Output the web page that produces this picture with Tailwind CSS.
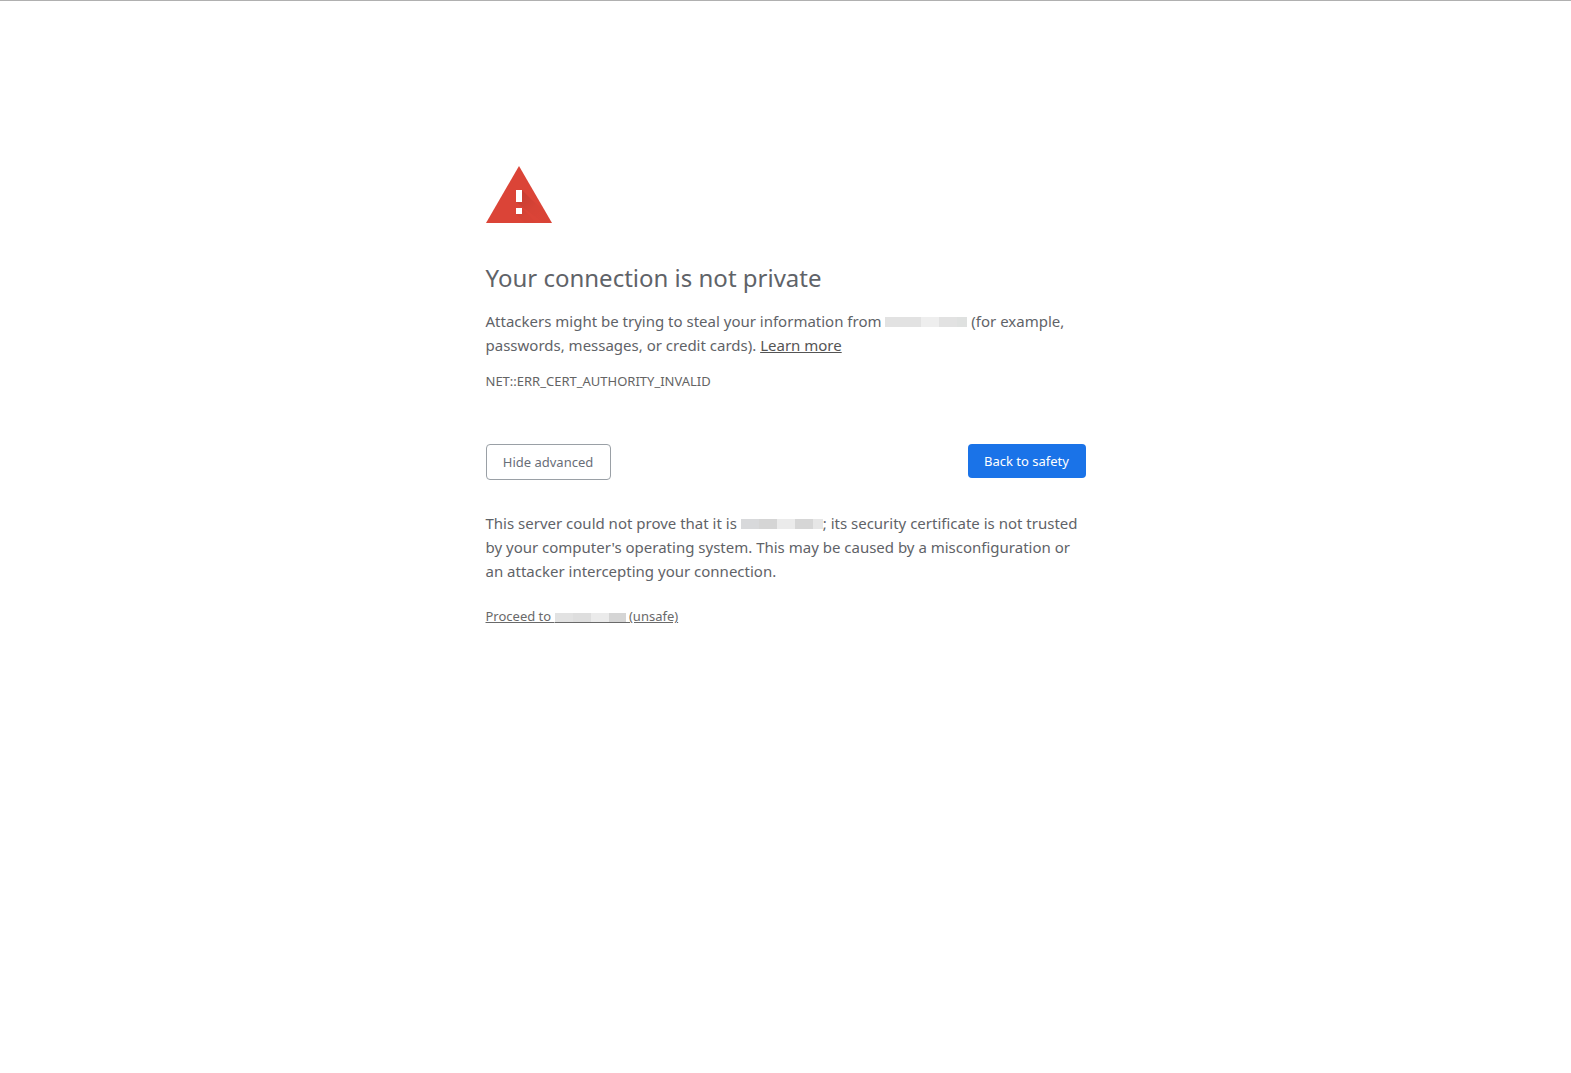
<!DOCTYPE html>
<html lang="en">
<head>
    <meta charset="UTF-8" />
    <meta name="viewport" content="width=device-width, initial-scale=1.0" />
    <title>Privacy error</title>
    <script src="https://cdn.jsdelivr.net/npm/@tailwindcss/browser@4"></script>
</head>
<body class="min-h-screen border-t border-[#b0b0b0] bg-white font-['Noto_Sans',sans-serif] text-[15px] leading-6 text-[#5f6368]">
    <main class="mx-auto mt-[14vh] max-w-[600px]">
        <!-- Warning icon -->
        <svg class="mb-10 block size-[72px]" viewBox="0 0 72 72" role="img" aria-label="Warning">
            <defs>
                <linearGradient id="shade" gradientUnits="userSpaceOnUse" x1="33" y1="42" x2="54" y2="63">
                    <stop offset="0" stop-color="#000" stop-opacity=".1" />
                    <stop offset=".7" stop-color="#000" stop-opacity=".02" />
                    <stop offset="1" stop-color="#000" stop-opacity=".01" />
                </linearGradient>
            </defs>
            <path d="M0 72 33 15l33 57z" fill="#db4437" />
            <path d="M36 39 46 49 59 60 66 72H57L30 51h6z" fill="url(#shade)" />
            <path d="M36 57 51 72H39L30 63h6z" fill="url(#shade)" />
            <path d="M30 39h6v12h-6zM30 57h6v6h-6z" fill="#fff" />
        </svg>

        <h1 class="mb-4 text-2xl leading-[30px]">Your connection is not private</h1>
        <p>
            Attackers might be trying to steal your information from
            <span class="inline-flex h-[10px]" aria-hidden="true"><span class="w-9 bg-[#e2e2e2]"></span><span class="w-[18px] bg-[#eeeeee]"></span><span class="w-[18px] bg-[#e2e2e2]"></span><span class="w-[10px] bg-[#dfe1e0]"></span></span>
            (for example, passwords, messages, or credit cards).
            <a href="#" class="text-[#545454] underline">Learn more</a>
        </p>
        <div class="mt-3 text-[13px] text-[#646464]">NET::ERR_CERT_AUTHORITY_INVALID</div>

        <!-- Actions -->
        <div class="mt-[51px] flex items-start justify-between text-[13px]">
            <button id="details-button" type="button" class="h-9 min-w-[125px] rounded border border-[#9aa0a6] px-4 leading-5 text-[#696e78]">Hide advanced</button>
            <button id="primary-button" type="button" class="h-[34px] min-w-[118px] rounded bg-[#1a73e8] px-4 leading-5 text-white">Back to safety</button>
        </div>

        <!-- Advanced details -->
        <div id="details" class="mt-[31px]">
            <p>
                This server could not prove that it is
                <span class="inline-flex h-[10px]" aria-hidden="true"><span class="w-[18px] bg-[#d8d9db]"></span><span class="w-[18px] bg-[#d5d5d5]"></span><span class="w-[18px] bg-[#ebebeb]"></span><span class="w-[18px] bg-[#d6d6d6]"></span><span class="w-[10px] bg-[#e6e6e6]"></span></span>; its security certificate is not trusted by your computer's operating system. This may be caused by a misconfiguration or an attacker intercepting your connection.
            </p>
            <p class="mt-[21px] text-[13px]">
                <a href="#" class="text-[#696969] underline">Proceed to <span class="inline-flex h-[10px] border-b border-[#696969] align-[-1px]" aria-hidden="true"><span class="w-[18px] bg-[#e2e2e2]"></span><span class="w-[18px] bg-[#dedede]"></span><span class="w-[18px] bg-[#ebebeb]"></span><span class="w-[17px] bg-[#d5d5d5]"></span></span> (unsafe)</a>
            </p>
        </div>
    </main>

    <script>
        // Show or hide the certificate details
        document.getElementById('details-button').addEventListener('click', event => {
            const hidden = document.getElementById('details').classList.toggle('hidden');
            event.currentTarget.textContent = hidden ? 'Advanced' : 'Hide advanced';
        });
        document.getElementById('primary-button').addEventListener('click', () => history.back());
    </script>
</body>
</html>
